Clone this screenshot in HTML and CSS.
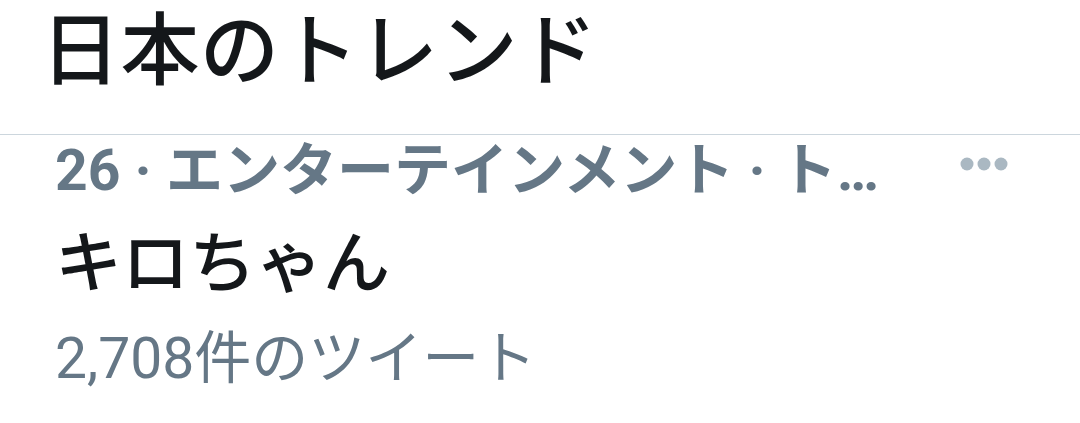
FILE: index.html
```html
<!DOCTYPE html>
<html lang="ja">
<head>
<meta charset="utf-8">
<link rel="stylesheet" href="styles.css">
</head>
<body>
<div class="page">
  <header class="header">
    <h1 class="title">日本のトレンド</h1>
  </header>
  <div class="trend">
    <div class="meta-row">
      <div class="meta">26 · エンターテインメント · ト…</div>
      <svg class="more" width="48" height="16" viewBox="0 0 48 16" aria-hidden="true">
        <circle cx="7" cy="8" r="6.5" fill="#aab8c2"/>
        <circle cx="24" cy="8" r="6.5" fill="#aab8c2"/>
        <circle cx="41" cy="8" r="6.5" fill="#aab8c2"/>
      </svg>
    </div>
    <div class="name">キロちゃん</div>
    <div class="count">2,708件のツイート</div>
  </div>
</div>
</body>
</html>
```
FILE: styles.css
```css
* { box-sizing: border-box; }
html, body { margin: 0; padding: 0; background: #ffffff; }
body {
  font-family: Roboto, "Noto Sans CJK JP", sans-serif;
  width: 1080px;
  height: 423px;
  overflow: hidden;
}
.header {
  height: 135px;
  padding-left: 41px;
  border-bottom: 1px solid #ccd6dd;
}
.title {
  margin: 0;
  font-family: "Noto Sans CJK JP", sans-serif;
  font-size: 79px;
  font-weight: 500;
  line-height: 90px;
  letter-spacing: 0.5px;
  color: #14171a;
}
.trend {
  padding-left: 55px;
}
.meta-row {
  display: flex;
  align-items: center;
  height: 72px;
}
.meta {
  flex: 1;
  font-size: 57px;
  font-weight: 700;
  color: #657786;
  white-space: nowrap;
  line-height: 72px;
}
.more {
  margin-right: 72px;
  margin-top: -14px;
}
.name {
  padding-top: 12px;
  font-size: 67px;
  font-weight: 500;
  color: #14171a;
  line-height: 90px;
}
.count {
  font-size: 57px;
  font-weight: 400;
  color: #657786;
  line-height: 100px;
}
```
